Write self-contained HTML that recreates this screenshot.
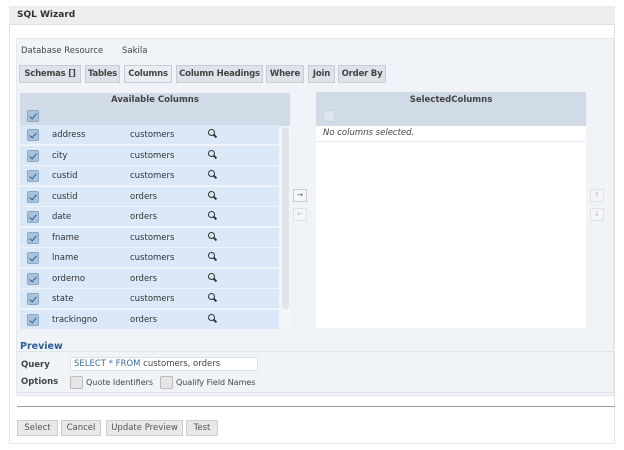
<!DOCTYPE html>
<html><head><style>
*{box-sizing:border-box;margin:0;padding:0}
body{width:624px;height:450px;background:#fff;font-family:"DejaVu Sans","Liberation Sans",sans-serif;font-size:8.5px;color:#333;position:relative;overflow:hidden;white-space:nowrap}
.a{position:absolute}
.tab{position:absolute;top:65px;height:18px;background:#dde3ea;border:1px solid #c8ced6;font-weight:bold;color:#444;font-size:8.5px;line-height:16px;text-align:center;letter-spacing:-0.2px}
.cb{position:absolute;width:12px;height:12px;background:#a9c3dc;border:1px solid #8aa7c4;border-radius:2px}
.cb:after{content:"";position:absolute;left:3px;top:1px;width:3px;height:6px;border:solid #2a5d96;border-width:0 1.5px 1.5px 0;transform:rotate(40deg)}
.row{position:absolute;left:20px;width:259px;height:20px;background:#dbe8f7;border-bottom:1px solid #eef3f9}
.row span{position:absolute;top:5px}
.mg{position:absolute;left:188px;top:4px;width:7px;height:7px;border:1.5px solid #333;border-radius:50%}
.mg:after{content:"";position:absolute;left:4px;top:5px;width:4px;height:2px;background:#333;transform:rotate(45deg)}
.btn{position:absolute;top:420px;height:16px;background:#e8e8e8;border:1px solid #ccc;color:#555;line-height:14px;text-align:center;font-size:8.5px}
.sb{position:absolute;width:14px;height:13px;border:1px solid #dfe3e7;background:#f3f5f7;color:#bbb;font-size:7px;text-align:center;line-height:11px}
</style></head><body>
<div class="a" style="left:9px;top:6px;width:606px;height:438px;border:1px solid #e6e6e6;background:#fff"></div>
<div class="a" style="left:9px;top:6px;width:606px;height:19px;background:#eeeeee;border-bottom:1px solid #e0e0e0"></div>
<div class="a" style="left:17px;top:10px;font-weight:bold;font-size:9px;color:#333">SQL Wizard</div>
<div class="a" style="left:16px;top:38px;width:598px;height:358px;background:#f0f4f8;border:1px solid #e4e8ec"></div>
<div class="a" style="left:21px;top:46px;color:#444">Database Resource</div>
<div class="a" style="left:122px;top:46px;color:#444">Sakila</div>
<div class="tab" style="left:19px;width:62px">Schemas []</div>
<div class="tab" style="left:85px;width:35px">Tables</div>
<div class="tab" style="left:124px;width:48px;background:#eaeef2">Columns</div>
<div class="tab" style="left:176px;width:87px">Column Headings</div>
<div class="tab" style="left:266px;width:38px">Where</div>
<div class="tab" style="left:308px;width:27px">Join</div>
<div class="tab" style="left:338px;width:48px">Order By</div>
<div class="a" style="left:20px;top:93px;width:270px;height:33px;background:#d0dbe7"></div>
<div class="a" style="left:20px;top:95px;width:270px;text-align:center;font-weight:bold;color:#444">Available Columns</div>
<div class="cb" style="left:27px;top:110px"></div>
<div class="a" style="left:281px;top:126px;width:9px;height:202px;background:#f4f6f8"></div>
<div class="a" style="left:282px;top:127px;width:7px;height:182px;background:#e2e5e8;border-radius:3px"></div>
<div class="row" style="top:125px"><span style="left:32px">address</span><span style="left:110px">customers</span><i class="mg"></i></div>
<div class="row" style="top:145.5px"><span style="left:32px">city</span><span style="left:110px">customers</span><i class="mg"></i></div>
<div class="row" style="top:166px"><span style="left:32px">custid</span><span style="left:110px">customers</span><i class="mg"></i></div>
<div class="row" style="top:186.5px"><span style="left:32px">custid</span><span style="left:110px">orders</span><i class="mg"></i></div>
<div class="row" style="top:207px"><span style="left:32px">date</span><span style="left:110px">orders</span><i class="mg"></i></div>
<div class="row" style="top:227.5px"><span style="left:32px">fname</span><span style="left:110px">customers</span><i class="mg"></i></div>
<div class="row" style="top:248px"><span style="left:32px">lname</span><span style="left:110px">customers</span><i class="mg"></i></div>
<div class="row" style="top:268.5px"><span style="left:32px">orderno</span><span style="left:110px">orders</span><i class="mg"></i></div>
<div class="row" style="top:289px"><span style="left:32px">state</span><span style="left:110px">customers</span><i class="mg"></i></div>
<div class="row" style="top:309.5px"><span style="left:32px">trackingno</span><span style="left:110px">orders</span><i class="mg"></i></div>
<div class="cb" style="left:27px;top:129px"></div><div class="cb" style="left:27px;top:149.5px"></div><div class="cb" style="left:27px;top:170px"></div><div class="cb" style="left:27px;top:190.5px"></div><div class="cb" style="left:27px;top:211px"></div><div class="cb" style="left:27px;top:231.5px"></div><div class="cb" style="left:27px;top:252px"></div><div class="cb" style="left:27px;top:272.5px"></div><div class="cb" style="left:27px;top:293px"></div><div class="cb" style="left:27px;top:313.5px"></div>
<div class="a" style="left:316px;top:92px;width:270px;height:236px;background:#fff"></div>
<div class="a" style="left:316px;top:92px;width:270px;height:34px;background:#d0dbe7"></div>
<div class="a" style="left:316px;top:95px;width:270px;text-align:center;font-weight:bold;color:#444">SelectedColumns</div>
<div class="a" style="left:323px;top:110px;width:12px;height:12px;background:#dde4ec;border:1px solid #cdd6e0"></div>
<div class="a" style="left:316px;top:126px;width:270px;height:16px;border-bottom:1px solid #e6eaee"></div>
<div class="a" style="left:323px;top:128px;font-style:italic;color:#444">No columns selected.</div>
<div class="sb" style="left:293px;top:189px;color:#555;border-color:#ccc">→</div>
<div class="sb" style="left:293px;top:208px">←</div>
<div class="sb" style="left:590px;top:189px">↑</div>
<div class="sb" style="left:590px;top:208px">↓</div>
<div class="a" style="left:16px;top:351px;width:598px;height:1px;background:#dfe4e8"></div>
<div class="a" style="left:20px;top:341px;font-weight:bold;color:#2a5d96;font-size:9.5px">Preview</div>
<div class="a" style="left:16px;top:392px;width:598px;height:1px;background:#dfe4e8"></div>
<div class="a" style="left:21px;top:360px;font-weight:bold;color:#444">Query</div>
<div class="a" style="left:70px;top:357px;width:188px;height:14px;background:#fff;border:1px solid #dde2e7"></div>
<div class="a" style="left:74px;top:359px;color:#444"><span style="color:#3a6ea5">SELECT * FROM</span> customers, orders</div>
<div class="a" style="left:21px;top:377px;font-weight:bold;color:#444">Options</div>
<div class="a" style="left:70px;top:376px;width:13px;height:13px;background:#e6e6e6;border:1px solid #bbb;border-radius:2px"></div>
<div class="a" style="left:86px;top:378px;color:#444;font-size:8px">Quote Identifiers</div>
<div class="a" style="left:160px;top:376px;width:13px;height:13px;background:#e6e6e6;border:1px solid #bbb;border-radius:2px"></div>
<div class="a" style="left:176px;top:378px;color:#444;font-size:8px">Qualify Field Names</div>
<div class="a" style="left:17px;top:406px;width:598px;height:1px;background:#999"></div>
<div class="btn" style="left:17px;width:41px">Select</div>
<div class="btn" style="left:61px;width:40px">Cancel</div>
<div class="btn" style="left:106px;width:77px">Update Preview</div>
<div class="btn" style="left:186px;width:32px">Test</div>
</body></html>
